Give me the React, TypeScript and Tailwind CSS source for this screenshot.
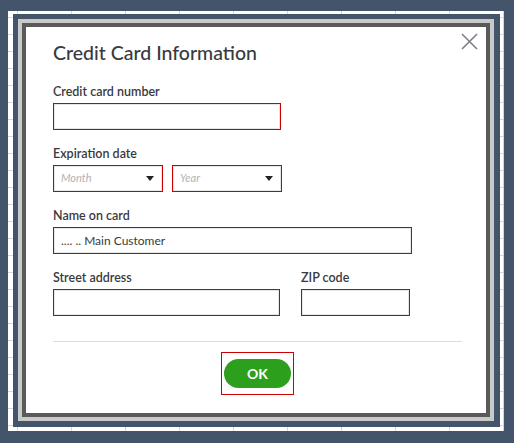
import React from 'react';

const font = { fontFamily: 'Lato, "Open Sans", sans-serif' };

const Field = ({ className = '', children }: { className?: string; children?: React.ReactNode }) => (
  <div
    className={`h-[27px] border border-[#cc0000] shadow-[inset_0_0_0_1px_#e6e6e6] bg-white flex items-center px-[7px] ${className}`}
  >
    {children}
  </div>
);

const Label = ({ children }: { children: React.ReactNode }) => (
  <div className="text-[12.5px] leading-[16px] font-semibold text-[#393a3d] mb-[3px]">{children}</div>
);

const Select = ({ placeholder }: { placeholder: string }) => (
  <Field className="w-[110px] justify-between">
    <span className="text-[11px] italic text-[#b3b3b3]">{placeholder}</span>
    <span className="w-0 h-0 border-l-[4px] border-r-[4px] border-t-[5px] border-l-transparent border-r-transparent border-t-[#222] mr-[1px]" />
  </Field>
);

export default function App() {
  return (
    <div className="w-[514px] h-[443px] bg-[#44546b] pt-[11px] pl-[8px]" style={font}>
      <div className="w-[496px] h-[420px] bg-white pt-[3px] pl-[5px] bg-[linear-gradient(to_right,#d6d6d6_1px,transparent_1px),linear-gradient(to_bottom,#d6d6d6_1px,transparent_1px)] bg-[size:54px_17px] bg-[position:9px_6px]">
        <div className="w-[487px] h-[413px] bg-[#44546b] pt-[5px] pl-[5px]">
          <div className="w-[476px] h-[402px] border-[4px] border-[#c9c9c9]">
            <div className="w-full h-full border-[4px] border-[#5a5a5a] bg-white relative">
              <button className="absolute right-[8px] top-[6px] text-[#7d8086]">
                <svg width="17" height="17" viewBox="0 0 17 17" stroke="currentColor" strokeWidth="1.6" fill="none">
                  <path d="M1 1L16 16M16 1L1 16" />
                </svg>
              </button>
              <div className="pl-[27px] pr-[20px] pt-[12px]">
                <h1 className="text-[19.5px] leading-[28px] font-medium text-[#393a3d]">Credit Card Information</h1>
                <div className="mt-[17px]">
                  <Label>Credit card number</Label>
                  <Field className="w-[228px]" />
                </div>
                <div className="mt-[16px]">
                  <Label>Expiration date</Label>
                  <div className="flex gap-[9px]">
                    <Select placeholder="Month" />
                    <Select placeholder="Year" />
                  </div>
                </div>
                <div className="mt-[16px]">
                  <Label>Name on card</Label>
                  <Field className="w-[359px]">
                    <span className="text-[12px] text-[#393a3d]">.... .. Main Customer</span>
                  </Field>
                </div>
                <div className="mt-[16px] flex gap-[21px]">
                  <div>
                    <Label>Street address</Label>
                    <Field className="w-[227px]" />
                  </div>
                  <div>
                    <Label>ZIP code</Label>
                    <Field className="w-[109px] border-[#8a0000]" />
                  </div>
                </div>
                <div className="mt-[25px] h-px bg-[#dcdcdc] w-[409px]" />
                <div className="w-[409px] flex justify-center mt-[10px]">
                  <div className="border border-[#cc0000] px-[2px] py-[6px]">
                    <button className="w-[67px] h-[29px] rounded-full bg-[#2ca01c] text-white font-bold text-[14px]">OK</button>
                  </div>
                </div>
              </div>
            </div>
          </div>
        </div>
      </div>
    </div>
  );
}
